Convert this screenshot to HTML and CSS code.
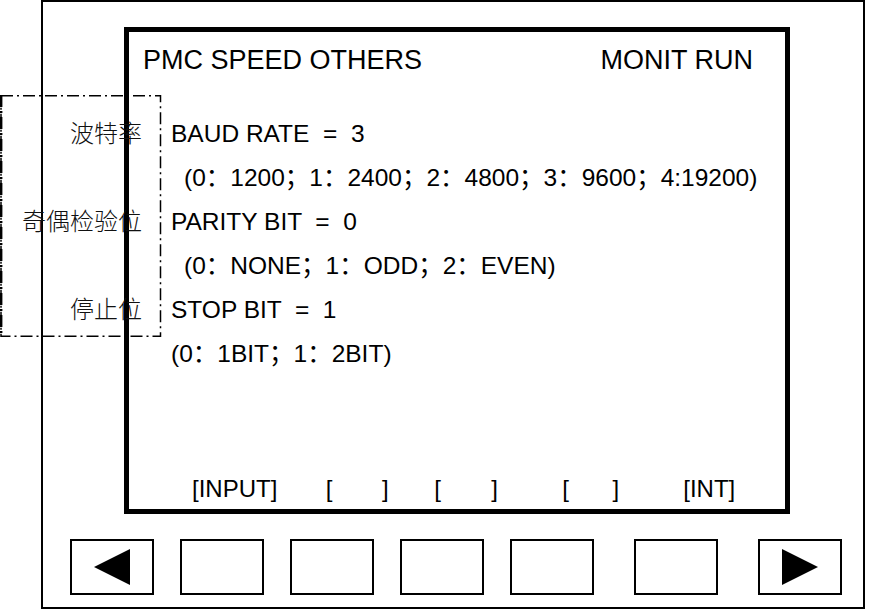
FILE: index.html
```html
<!DOCTYPE html>
<html lang="zh">
<head>
<meta charset="utf-8">
<title>PMC SPEED OTHERS</title>
<link rel="stylesheet" href="styles.css">
</head>
<body>
<div class="page">
  <div class="frame">
    <div class="screen">
      <div class="header">
        <span>PMC SPEED OTHERS</span>
        <span>MONIT RUN</span>
      </div>
      <div class="params">
        <div class="line">BAUD RATE  =  3</div>
        <div class="line indent">(0：1200；1：2400；2：4800；3：9600；4:19200)</div>
        <div class="line">PARITY BIT  =  0</div>
        <div class="line indent">(0：NONE；1：ODD；2：EVEN)</div>
        <div class="line">STOP BIT  =  1</div>
        <div class="line">(0：1BIT；1：2BIT)</div>
      </div>
      <div class="softkeys">
        <span class="sk">[INPUT]</span>
        <span class="sk"><span class="blank w1"><span>[</span><span>]</span></span></span>
        <span class="sk"><span class="blank w2"><span>[</span><span>]</span></span></span>
        <span class="sk"><span class="blank w3"><span>[</span><span>]</span></span></span>
        <span class="sk">[INT]</span>
      </div>
    </div>
    <div class="keys">
      <div class="key">
        <svg class="arrow" width="36" height="36" viewBox="0 0 36 36"><polygon points="0,18 36,0 36,36" fill="#000"/></svg>
      </div>
      <div class="key"></div>
      <div class="key"></div>
      <div class="key"></div>
      <div class="key"></div>
      <div class="key far"></div>
      <div class="key far">
        <svg class="arrow" width="36" height="36" viewBox="0 0 36 36"><polygon points="0,0 36,18 0,36" fill="#000"/></svg>
      </div>
    </div>
  </div>
  <div class="annot">
    <svg class="annot-border" width="162" height="242" viewBox="0 0 162 242">
      <rect x="1" y="0.75" width="159.5" height="240.5" fill="none" stroke="#000" stroke-width="1.5" stroke-dasharray="12 4 2 4"/>
      <line x1="1.2" y1="0" x2="1.2" y2="242" stroke="#000" stroke-width="2.4" stroke-dasharray="12 4 2 4"/>
    </svg>
    <div class="label">波特率</div>
    <div class="label">奇偶检验位</div>
    <div class="label">停止位</div>
  </div>
</div>
</body>
</html>
```
FILE: styles.css
```css
html, body {
  margin: 0;
  padding: 0;
  background: #fff;
}

.page {
  position: relative;
  width: 871px;
  height: 610px;
  overflow: hidden;
  font-family: "Liberation Sans", Arial, "Noto Sans CJK SC", sans-serif;
  color: #000;
}

.frame {
  box-sizing: border-box;
  margin-left: 41px;
  width: 824px;
  height: 609px;
  border: 2px solid #000;
  padding-top: 25px;
}

.screen {
  box-sizing: border-box;
  margin-left: 81px;
  width: 666px;
  height: 487px;
  border: 5px solid #000;
  display: flex;
  flex-direction: column;
}

.header {
  display: flex;
  justify-content: space-between;
  font-size: 27px;
  line-height: 30px;
  padding: 13.3px 32px 0 14px;
}

.params {
  margin-top: 36.7px;
  padding-left: 42px;
  font-size: 24.5px;
  line-height: 44px;
}

.line {
  white-space: pre;
}

.indent {
  padding-left: 13px;
}

.softkeys {
  margin-top: auto;
  padding: 0 0 5.3px 63px;
  display: grid;
  grid-template-columns: 133.7px 108.6px 128px 121px auto;
  font-size: 24px;
  line-height: 30px;
}

.blank {
  display: flex;
  justify-content: space-between;
}

.w1 { width: 63px; }
.w2 { width: 63.7px; }
.w3 { width: 57px; }

.keys {
  display: flex;
  margin-top: 25px;
  padding-left: 27px;
  gap: 26px;
}

.key {
  box-sizing: border-box;
  width: 84px;
  height: 56px;
  border: 2px solid #000;
  display: flex;
  align-items: center;
  justify-content: center;
}

.key.far {
  margin-left: 14px;
}

.arrow {
  display: block;
}

.annot {
  position: absolute;
  left: 0;
  top: 95px;
  width: 162px;
  height: 242px;
  box-sizing: border-box;
  padding: 15px 20px 0 0;
  display: flex;
  flex-direction: column;
  align-items: flex-end;
  gap: 44px;
}

.annot-border {
  position: absolute;
  left: 0;
  top: 0;
}

.label {
  position: relative;
  font-family: "Noto Sans CJK SC", sans-serif;
  font-weight: 300;
  font-size: 24px;
  line-height: 44px;
  color: #111;
}
```
